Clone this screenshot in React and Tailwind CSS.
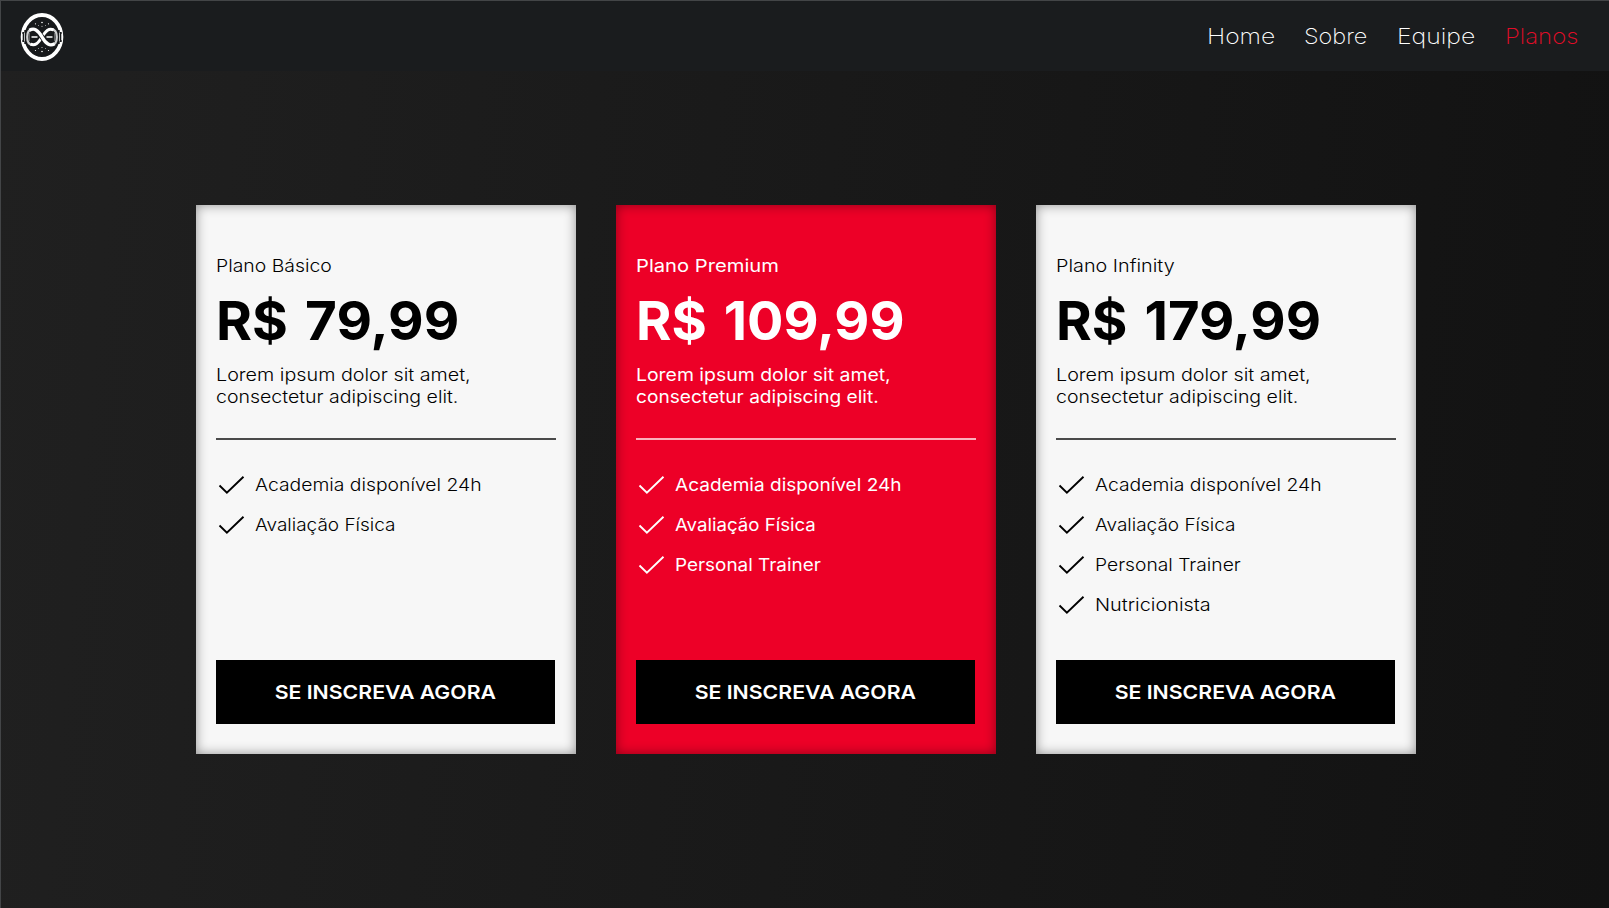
import React from "react";

const links = [
  { label: "Home", width: "w-[97px]", stretch: "scale-x-[1.12]", color: "text-white" },
  { label: "Sobre", width: "w-[93px]", stretch: "scale-x-[1.065]", color: "text-white" },
  { label: "Equipe", width: "w-[108px]", stretch: "scale-x-[1.125]", color: "text-white" },
  { label: "Planos", width: "w-[104px]", stretch: "scale-x-[1.09]", color: "text-[#e30c28]" },
];

const features = {
  gym: { label: "Academia disponível 24h", stretch: "scale-x-[1.088]", lightStretch: "scale-x-[1.105]" },
  checkup: { label: "Avaliação Física", stretch: "scale-x-[1.065]", lightStretch: "scale-x-[1.085]" },
  trainer: { label: "Personal Trainer", stretch: "scale-x-[1.08]", lightStretch: "scale-x-[1.1]" },
  nutrition: { label: "Nutricionista", stretch: "scale-x-[1.108]", lightStretch: "scale-x-[1.135]" },
};

const plans = [
  {
    name: "Plano Básico",
    nameStretch: "scale-x-[1.108]",
    price: "R$ 79,99",
    priceStretch: "scale-x-[1.016]",
    features: [features.gym, features.checkup],
  },
  {
    name: "Plano Premium",
    nameStretch: "scale-x-[1.153]",
    price: "R$ 109,99",
    priceStretch: "scale-x-[1.001]",
    features: [features.gym, features.checkup, features.trainer],
    featured: true,
  },
  {
    name: "Plano Infinity",
    nameStretch: "scale-x-[1.13]",
    price: "R$ 179,99",
    priceStretch: "scale-x-[1.009]",
    features: [features.gym, features.checkup, features.trainer, features.nutrition],
  },
];

function Logo() {
  return (
    <svg width="44" height="50" viewBox="0 0 44 50" fill="none" className="mt-px">
      <ellipse cx="22" cy="25" rx="19.4" ry="22" fill="#17191b" stroke="#fff" strokeWidth="3.8" />
      <g fill="#fff">
        <circle cx="22" cy="10.5" r="0.8" />
        <circle cx="15.5" cy="11.8" r="0.6" />
        <circle cx="28.5" cy="11.8" r="0.6" />
        <circle cx="18.5" cy="13.5" r="0.45" />
        <circle cx="25.5" cy="13.5" r="0.45" />
        <circle cx="22" cy="14.2" r="0.5" />
        <circle cx="22" cy="39.5" r="0.8" />
        <circle cx="15.5" cy="38.5" r="0.6" />
        <circle cx="28.5" cy="38.5" r="0.6" />
        <circle cx="18.5" cy="36.5" r="0.45" />
        <circle cx="25.5" cy="36.5" r="0.45" />
        <circle cx="22" cy="35.5" r="0.5" />
      </g>
      <path d="M3.5 20v10M5.5 18v14M38.5 18v14M40.5 20v10" stroke="#17191b" strokeWidth="2.4" />
      <path d="M2.5 22v6M4.5 20.5v9M39.5 20.5v9M41.5 22v6" stroke="#b9bbbc" strokeWidth="1" />
      {/* side arcs are dimmer than the crossing strands */}
      <path
        d="M12.5 17.3C8.6 17.3 7.2 21 7.2 25C7.2 29 8.6 32.7 12.5 32.7M31.5 17.3C35.4 17.3 36.8 21 36.8 25C36.8 29 35.4 32.7 31.5 32.7"
        stroke="#cfd0d1"
        strokeWidth="2.2"
      />
      <path d="M9.3 21v8M34.7 21v8" stroke="#77797a" strokeWidth="1" />
      <path d="M10.5 32.2C15 34.2 18 31.5 22 25C26 18.5 29 15.8 33.5 17.8" stroke="#fff" strokeWidth="3" />
      <path d="M18 19.5L26 30.5" stroke="#17191b" strokeWidth="5" />
      <path d="M9.5 18.3C14 15.5 18 17.8 22 25C26 32.2 30 34.5 34.5 31.7" stroke="#fff" strokeWidth="3.4" />
      <path d="M11.5 25h6M26.5 25h6" stroke="#fff" strokeWidth="1.6" />
    </svg>
  );
}

function Check() {
  return (
    <svg width="30" height="30" viewBox="0 0 30 30" fill="none" className="shrink-0">
      <path d="M3.5 15.5L10.9 22.6L27.5 6.7" stroke="currentColor" strokeWidth="1.9" />
    </svg>
  );
}

function PlanCard({ plan }) {
  const theme = plan.featured ? "bg-[#ed0027] text-white" : "bg-[#f7f7f7] text-black";
  const rule = plan.featured ? "bg-[#fbb0bc]" : "bg-[#4a4a4a]";
  const body = plan.featured ? "font-normal" : "font-light";
  return (
    <article
      className={`flex h-[549px] w-[380px] flex-col px-5 pt-[50px] pb-[30px] shadow-[inset_0_0_12px_rgba(0,0,0,0.42)] ${theme}`}
    >
      <h2 className={`-ml-[0.5px] h-[22px] origin-left text-[17.5px] leading-[22px] ${body} ${plan.nameStretch}`}>
        {plan.name}
      </h2>
      <p
        className={`mt-[9px] h-[70px] origin-left text-[54px] leading-[70px] font-bold whitespace-nowrap [word-spacing:4px] ${plan.priceStretch}`}
      >
        {plan.price}
      </p>
      <p className={`mt-2 -ml-[0.5px] text-[17.5px] leading-[22px] whitespace-nowrap ${body}`}>
        <span className={`block origin-left ${plan.featured ? "scale-x-[1.109]" : "scale-x-[1.128]"}`}>
          Lorem ipsum dolor sit amet,
        </span>
        <span className={`block origin-left ${plan.featured ? "scale-x-[1.092]" : "scale-x-[1.115]"}`}>
          consectetur adipiscing elit.
        </span>
      </p>
      <div className={`mt-[30px] h-[2px] shrink-0 ${rule}`} />
      <ul className="mt-[30px] flex flex-col gap-[10px]">
        {plan.features.map((feature) => (
          <li key={feature.label} className="flex h-[30px] items-center gap-[9px]">
            <Check />
            <span
              className={`origin-left text-[17.5px] leading-[22px] whitespace-nowrap ${body} ${plan.featured ? feature.stretch : feature.lightStretch}`}
            >
              {feature.label}
            </span>
          </li>
        ))}
      </ul>
      <button className="mt-auto flex h-16 w-[339px] shrink-0 items-center justify-center bg-black text-[19.3px] leading-6 font-semibold text-white">
        <span className="scale-x-[1.103]">SE INSCREVA AGORA</span>
      </button>
    </article>
  );
}

export default function App() {
  return (
    <div className="flex h-[908px] w-[1609px] flex-col overflow-hidden border-t border-l border-[#434547] bg-linear-[95deg,#202020,#121212] font-['Inter',sans-serif]">
      <header className="flex h-[70px] shrink-0 items-center justify-between bg-[#1a1c1e] pl-[19px]">
        <Logo />
        <nav className="flex text-[22px] leading-7 font-extralight">
          {links.map((link) => (
            <a key={link.label} className={`${link.width} ${link.color}`}>
              <span className={`block origin-left ${link.stretch}`}>{link.label}</span>
            </a>
          ))}
        </nav>
      </header>
      <main className="flex gap-10 pt-[134px] pl-[195px]">
        {plans.map((plan) => (
          <PlanCard key={plan.name} plan={plan} />
        ))}
      </main>
    </div>
  );
}
